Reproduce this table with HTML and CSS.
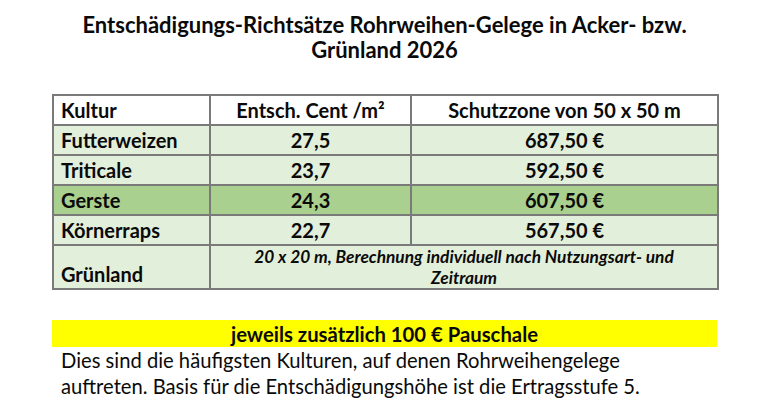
FILE: index.html
```html
<!DOCTYPE html>
<html lang="de">
<head>
<meta charset="utf-8">
<link rel="stylesheet" href="styles.css">
</head>
<body>
<div class="page">
  <h1 class="title">Entschädigungs-Richtsätze Rohrweihen-Gelege in Acker- bzw.<br>Grünland 2026</h1>
  <table class="rates">
    <colgroup>
      <col class="c1"><col class="c2"><col class="c3">
    </colgroup>
    <tr class="head">
      <td class="left">Kultur</td>
      <td>Entsch. Cent /m²</td>
      <td>Schutzzone von 50 x 50 m</td>
    </tr>
    <tr class="light">
      <td class="left">Futterweizen</td>
      <td>27,5</td>
      <td>687,50 €</td>
    </tr>
    <tr class="light">
      <td class="left">Triticale</td>
      <td>23,7</td>
      <td>592,50 €</td>
    </tr>
    <tr class="dark">
      <td class="left">Gerste</td>
      <td>24,3</td>
      <td>607,50 €</td>
    </tr>
    <tr class="light">
      <td class="left">Körnerraps</td>
      <td>22,7</td>
      <td>567,50 €</td>
    </tr>
    <tr class="light tall">
      <td class="left bottom">Grünland</td>
      <td colspan="2" class="note">20 x 20 m, Berechnung individuell nach Nutzungsart- und<br>Zeitraum</td>
    </tr>
  </table>
  <div class="flat">jeweils zusätzlich 100 € Pauschale</div>
  <p class="info">Dies sind die häufigsten Kulturen, auf denen Rohrweihengelege<br>auftreten. Basis für die Entschädigungshöhe ist die Ertragsstufe 5.</p>
</div>
</body>
</html>
```
FILE: styles.css
```css
html, body {
  margin: 0;
  padding: 0;
  background: #ffffff;
}
body {
  font-family: Lato, "Open Sans", "Liberation Sans", sans-serif;
  color: #0a0a0a;
}
.page {
  width: 665px;
  margin-left: 52px;
  padding-top: 12px;
}
.title {
  margin: 0;
  font-size: 22px;
  font-weight: 700;
  line-height: 25px;
  text-align: center;
}
.rates {
  margin-top: 32px;
  width: 665px;
  border-collapse: collapse;
  table-layout: fixed;
  font-size: 20px;
  font-weight: 700;
}
.c1 { width: 157px; }
.c2 { width: 201px; }
.c3 { width: 307px; }
.rates td {
  border: 2px solid #7a7a7a;
  height: 28px;
  padding: 0 6px;
  text-align: center;
  line-height: 26px;
}
.rates td.left {
  text-align: left;
  padding-left: 7px;
}
.head td { background: #ffffff; }
.light td { background: #e2efda; }
.dark td { background: #a9d08e; }
.tall td { height: 39px; }
.rates td.bottom {
  vertical-align: bottom;
  padding-bottom: 1px;
}
.rates td.note {
  vertical-align: top;
  font-size: 17.3px;
  font-style: italic;
  line-height: 21px;
  padding-top: 0;
}
.flat {
  margin-top: 30px;
  height: 27px;
  background: #ffff00;
  font-size: 20.3px;
  font-weight: 700;
  line-height: 28px;
  text-align: center;
}
.info {
  margin: 0;
  padding-left: 9px;
  font-size: 20.2px;
  line-height: 26px;
}
```
